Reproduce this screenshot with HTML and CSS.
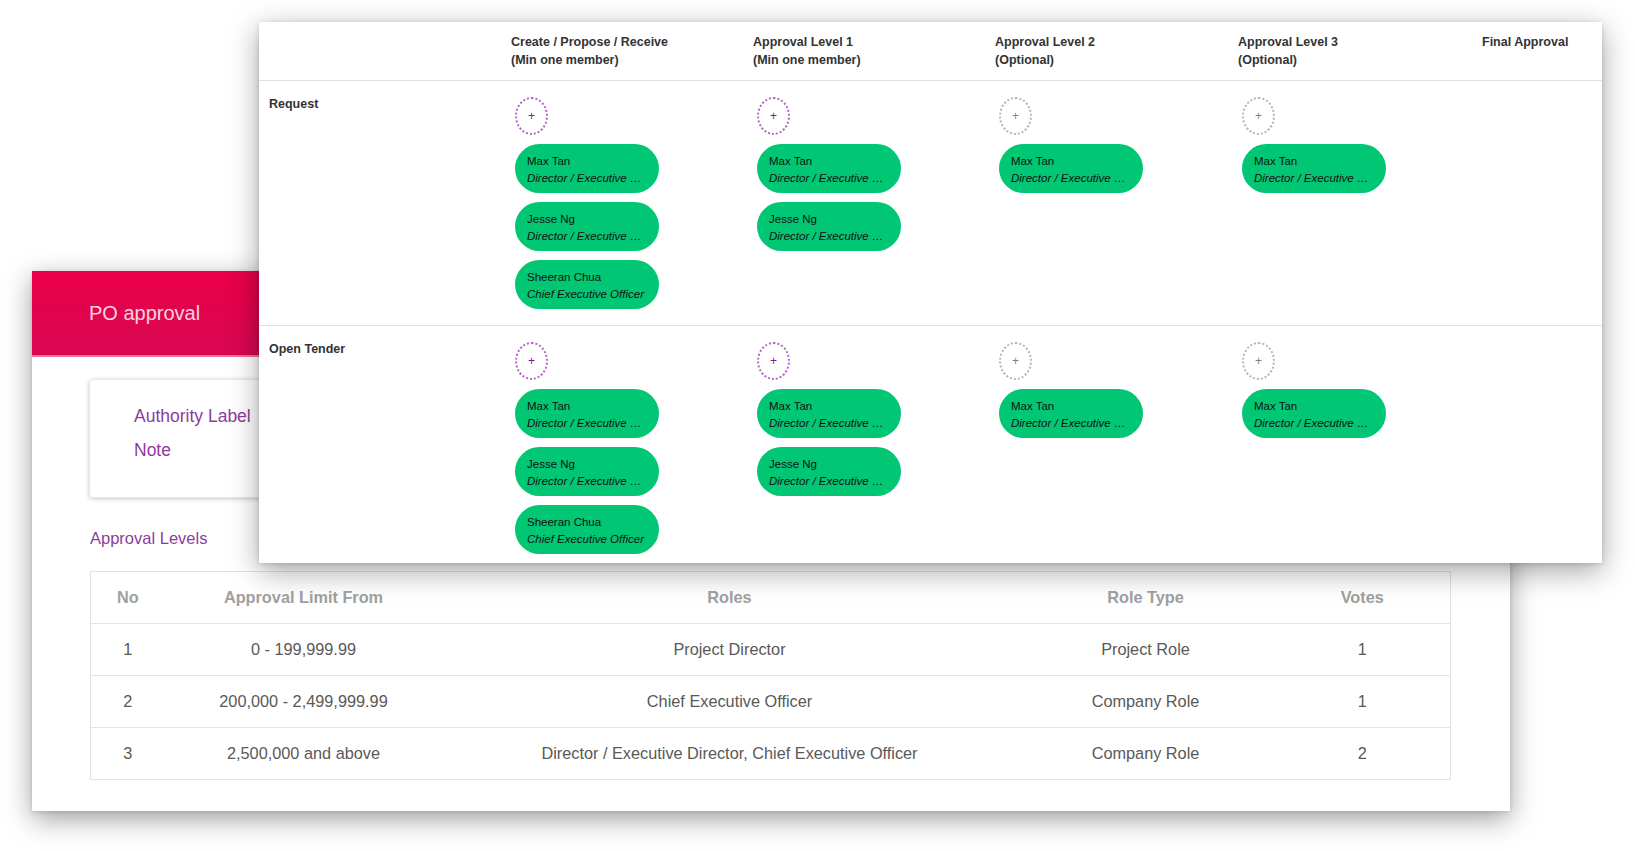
FILE: index.html
```html
<!DOCTYPE html>
<html lang="en">
<head>
<meta charset="utf-8">
<title>PO approval</title>
<link rel="stylesheet" href="styles.css">
</head>
<body>
<div class="stage">
  <section class="policy-card">
    <header class="policy-head">PO approval</header>
    <div class="policy-body">
      <div class="info-card">
        <div class="info-line">Authority Label</div>
        <div class="info-line">Note</div>
      </div>
      <h3 class="section-title">Approval Levels</h3>
      <table class="levels">
        <colgroup>
          <col class="c-no"><col class="c-limit"><col class="c-roles"><col class="c-type"><col class="c-votes">
        </colgroup>
        <thead>
          <tr><th>No</th><th>Approval Limit From</th><th>Roles</th><th>Role Type</th><th>Votes</th></tr>
        </thead>
        <tbody>
          <tr><td>1</td><td>0 - 199,999.99</td><td>Project Director</td><td>Project Role</td><td>1</td></tr>
          <tr><td>2</td><td>200,000 - 2,499,999.99</td><td>Chief Executive Officer</td><td>Company Role</td><td>1</td></tr>
          <tr><td>3</td><td>2,500,000 and above</td><td>Director / Executive Director, Chief Executive Officer</td><td>Company Role</td><td>2</td></tr>
        </tbody>
      </table>
    </div>
  </section>

  <section class="matrix-card">
    <div class="matrix-row matrix-head">
      <div></div>
      <div class="col-title">Create / Propose / Receive<br>(Min one member)</div>
      <div class="col-title">Approval Level 1<br>(Min one member)</div>
      <div class="col-title">Approval Level 2<br>(Optional)</div>
      <div class="col-title">Approval Level 3<br>(Optional)</div>
      <div class="col-title">Final Approval</div>
    </div>

    <div class="matrix-row">
      <div class="row-label">Request</div>
      <div class="cell">
        <span class="add add-required">+</span>
        <div class="chip"><span class="chip-name">Max Tan</span><span class="chip-role">Director / Executive …</span></div>
        <div class="chip"><span class="chip-name">Jesse Ng</span><span class="chip-role">Director / Executive …</span></div>
        <div class="chip"><span class="chip-name">Sheeran Chua</span><span class="chip-role">Chief Executive Officer</span></div>
      </div>
      <div class="cell">
        <span class="add add-required">+</span>
        <div class="chip"><span class="chip-name">Max Tan</span><span class="chip-role">Director / Executive …</span></div>
        <div class="chip"><span class="chip-name">Jesse Ng</span><span class="chip-role">Director / Executive …</span></div>
      </div>
      <div class="cell">
        <span class="add add-optional">+</span>
        <div class="chip"><span class="chip-name">Max Tan</span><span class="chip-role">Director / Executive …</span></div>
      </div>
      <div class="cell">
        <span class="add add-optional">+</span>
        <div class="chip"><span class="chip-name">Max Tan</span><span class="chip-role">Director / Executive …</span></div>
      </div>
      <div class="cell"></div>
    </div>

    <div class="matrix-row">
      <div class="row-label">Open Tender</div>
      <div class="cell">
        <span class="add add-required">+</span>
        <div class="chip"><span class="chip-name">Max Tan</span><span class="chip-role">Director / Executive …</span></div>
        <div class="chip"><span class="chip-name">Jesse Ng</span><span class="chip-role">Director / Executive …</span></div>
        <div class="chip"><span class="chip-name">Sheeran Chua</span><span class="chip-role">Chief Executive Officer</span></div>
      </div>
      <div class="cell">
        <span class="add add-required">+</span>
        <div class="chip"><span class="chip-name">Max Tan</span><span class="chip-role">Director / Executive …</span></div>
        <div class="chip"><span class="chip-name">Jesse Ng</span><span class="chip-role">Director / Executive …</span></div>
      </div>
      <div class="cell">
        <span class="add add-optional">+</span>
        <div class="chip"><span class="chip-name">Max Tan</span><span class="chip-role">Director / Executive …</span></div>
      </div>
      <div class="cell">
        <span class="add add-optional">+</span>
        <div class="chip"><span class="chip-name">Max Tan</span><span class="chip-role">Director / Executive …</span></div>
      </div>
      <div class="cell"></div>
    </div>
  </section>
</div>
</body>
</html>
```

FILE: styles.css
```css
* { box-sizing: border-box; }

html, body {
  margin: 0;
  padding: 0;
  background: #ffffff;
  font-family: "Liberation Sans", Arial, Helvetica, sans-serif;
}

.stage {
  position: relative;
  width: 1635px;
  height: 851px;
  overflow: hidden;
}

/* ---------- back window: PO approval ---------- */
.policy-card {
  position: absolute;
  left: 32px;
  top: 271px;
  width: 1478px;
  height: 540px;
  background: #ffffff;
  box-shadow: 0 8px 26px rgba(0, 0, 0, 0.38), 0 1px 4px rgba(0, 0, 0, 0.12);
  overflow: hidden;
}

.policy-head {
  height: 86px;
  padding-left: 57px;
  line-height: 84px;
  font-size: 20px;
  color: rgba(255, 255, 255, 0.84);
  background: linear-gradient(180deg, #ea0049 0%, #d90752 100%);
  box-shadow: inset 0 -2px 0 #f3709a;
}

.policy-body {
  padding: 22px 60px 0 57px;
}

.info-card {
  height: 119px;
  padding: 19px 44px 0 44px;
  border: 1px solid #e8e8e8;
  border-radius: 4px;
  box-shadow: 0 1px 4px rgba(0, 0, 0, 0.22);
}

.info-line {
  font-size: 17.5px;
  line-height: 34px;
  color: #8e3c9e;
}

.section-title {
  margin: 30px 0 23px 1px;
  font-size: 16.5px;
  line-height: 20px;
  font-weight: 400;
  color: #8e3c9e;
}

.levels {
  width: 1360px;
  margin-left: 1px;
  border-collapse: collapse;
  border: 1px solid #e2e2e2;
  table-layout: fixed;
}

.c-no { width: 74px; }
.c-limit { width: 278px; }
.c-roles { width: 574px; }
.c-type { width: 258px; }
.c-votes { width: 176px; }

.levels th,
.levels td {
  height: 52px;
  padding: 0;
  text-align: center;
  vertical-align: middle;
  border-bottom: 1px solid #e4e4e4;
  font-size: 16.3px;
}

.levels th {
  font-weight: 700;
  color: #a0a0a0;
}

.levels td {
  color: #595959;
}

/* ---------- front window: approval matrix ---------- */
.matrix-card {
  position: absolute;
  left: 259px;
  top: 22px;
  width: 1343px;
  height: 541px;
  background: #ffffff;
  overflow: hidden;
  box-shadow: 0 8px 28px rgba(0, 0, 0, 0.36), 0 1px 5px rgba(0, 0, 0, 0.14);
}

.matrix-row {
  display: grid;
  grid-template-columns: 252px 242px 242px 243px 244px 1fr;
  border-bottom: 1px solid #e0e0e7;
}

.matrix-head {
  height: 59px;
  padding-top: 11px;
}

.col-title {
  font-size: 12.5px;
  font-weight: 700;
  line-height: 18px;
  color: #333333;
}

.row-label {
  padding: 15px 0 0 10px;
  font-size: 12.5px;
  font-weight: 700;
  line-height: 16px;
  color: #333333;
}

.cell {
  display: flex;
  flex-direction: column;
  align-items: flex-start;
  gap: 9px;
  padding: 16px 0 16px 4px;
}

.add {
  display: flex;
  align-items: center;
  justify-content: center;
  width: 33px;
  height: 38px;
  border-radius: 50%;
  font-size: 12px;
  line-height: 1;
}

.add-required {
  border: 2px dotted #b564c8;
  color: #7a1a9a;
}

.add-optional {
  border: 2px dotted #b5b5b5;
  color: #808080;
}

.chip {
  display: flex;
  flex-direction: column;
  width: 144px;
  height: 49px;
  padding: 9px 14px 0 12px;
  border-radius: 25px;
  background: #01c674;
  color: #111111;
  font-size: 11.5px;
  line-height: 17px;
}

.chip-name,
.chip-role {
  white-space: nowrap;
  overflow: hidden;
  text-overflow: ellipsis;
}

.chip-role {
  font-style: italic;
}
```
